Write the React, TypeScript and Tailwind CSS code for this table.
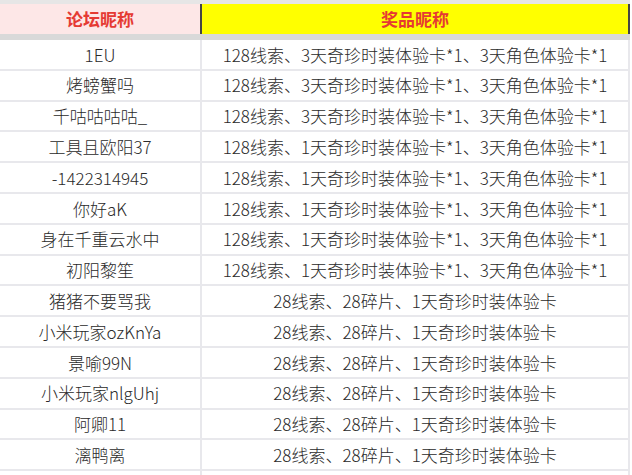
import React from 'react';

const rows: [string, string][] = [
  ['1EU', '128线索、3天奇珍时装体验卡*1、3天角色体验卡*1'],
  ['烤螃蟹吗', '128线索、3天奇珍时装体验卡*1、3天角色体验卡*1'],
  ['千咕咕咕咕_', '128线索、3天奇珍时装体验卡*1、3天角色体验卡*1'],
  ['工具且欧阳37', '128线索、1天奇珍时装体验卡*1、3天角色体验卡*1'],
  ['-1422314945', '128线索、1天奇珍时装体验卡*1、3天角色体验卡*1'],
  ['你好aK', '128线索、1天奇珍时装体验卡*1、3天角色体验卡*1'],
  ['身在千重云水中', '128线索、1天奇珍时装体验卡*1、3天角色体验卡*1'],
  ['初阳黎笙', '128线索、1天奇珍时装体验卡*1、3天角色体验卡*1'],
  ['猪猪不要骂我', '28线索、28碎片、1天奇珍时装体验卡'],
  ['小米玩家ozKnYa', '28线索、28碎片、1天奇珍时装体验卡'],
  ['景喻99N', '28线索、28碎片、1天奇珍时装体验卡'],
  ['小米玩家nlgUhj', '28线索、28碎片、1天奇珍时装体验卡'],
  ['阿卿11', '28线索、28碎片、1天奇珍时装体验卡'],
  ['漓鸭离', '28线索、28碎片、1天奇珍时装体验卡'],
  ['', ''],
];

export default function App() {
  return (
    <div
      className="w-[632px] h-[475px] overflow-hidden bg-white text-[17px] text-[#2a2a2a]"
      style={{ fontFamily: '"Microsoft YaHei", "Noto Sans CJK SC", "Noto Sans", sans-serif' }}
    >
      {/* top strip */}
      <div className="h-[4px] w-[630px] bg-[#e6e6e6]" />

      {/* header */}
      <div className="flex h-[30px] font-bold text-[#e53a33]">
        <div className="w-[200px] flex items-center justify-center bg-[#fde7e7]">论坛昵称</div>
        <div className="w-[430px] flex items-center justify-center bg-[#ffff00] border-x-2 border-[#454545]">
          奖品昵称
        </div>
      </div>

      {/* separator band */}
      <div className="h-[6px] w-[630px] bg-[#d9d9d9]" />

      {/* rows */}
      {rows.map(([name, prize], i) => (
        <div key={i} className="flex h-[30.8px] w-[630px] border-b-2 border-[#e8e8ec] font-light">
          <div className="w-[202px] flex items-center justify-center border-r-2 border-[#e8e8ec]">{name}</div>
          <div className="w-[428px] flex items-center justify-center border-r-2 border-[#e8e8ec]">{prize}</div>
        </div>
      ))}
    </div>
  );
}
